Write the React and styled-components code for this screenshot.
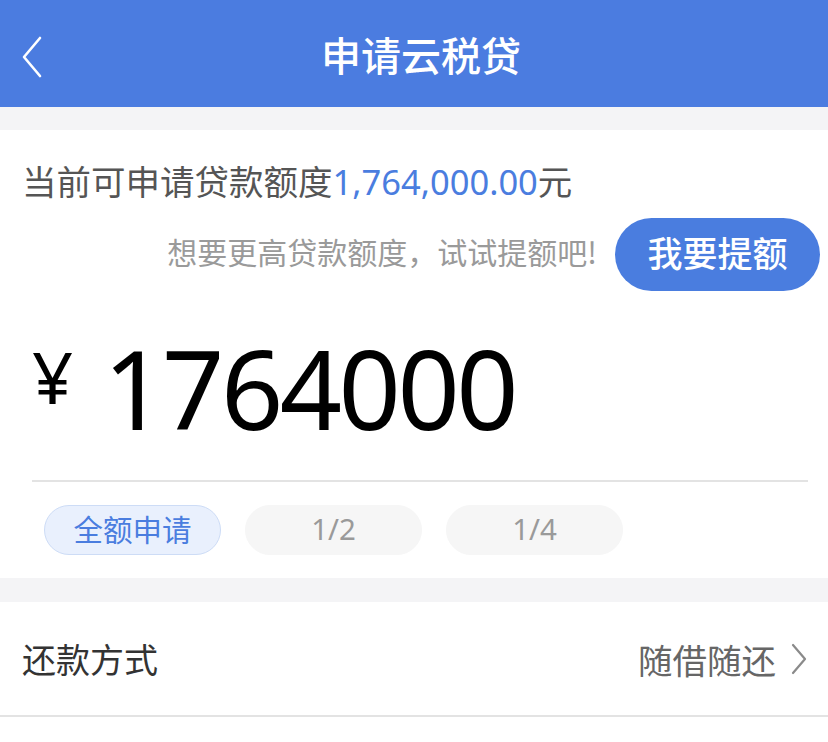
import React from "react";
import styled, { createGlobalStyle } from "styled-components";

const Global = createGlobalStyle`
  html, body { margin: 0; padding: 0; background: #ffffff; }
  body { font-family: "Noto Sans", "Noto Sans CJK SC", sans-serif; }
  * { box-sizing: border-box; }
`;

const Page = styled.div`
  width: 828px;
  min-height: 742px;
  background: #ffffff;
  display: flex;
  flex-direction: column;
`;

const Header = styled.header`
  height: 107px;
  background: #4b7ce0;
  display: flex;
  align-items: center;
  justify-content: center;
  position: relative;
`;

const BackButton = styled.button`
  position: absolute;
  left: 14px;
  top: 34px;
  width: 36px;
  height: 46px;
  padding: 0;
  border: none;
  background: transparent;
  display: flex;
  align-items: center;
  justify-content: center;
`;

const Title = styled.h1`
  margin: 0;
  font-family: "Noto Sans CJK SC", sans-serif;
  font-size: 40px;
  font-weight: 500;
  color: #ffffff;
  line-height: 1;
  padding-left: 14px;
`;

const Gap = styled.div`
  height: ${(p) => p.h}px;
  background: #f4f4f6;
`;

const Card = styled.section`
  background: #ffffff;
  padding: 32px 0 23px;
  display: flex;
  flex-direction: column;
`;

const QuotaLine = styled.div`
  padding-left: 22px;
  font-family: "Noto Sans", "Noto Sans CJK SC", sans-serif;
  font-size: 34.5px;
  line-height: 40px;
  color: #555555;
  white-space: nowrap;
`;

const Blue = styled.span`
  color: #4a7ddf;
`;

const RaiseRow = styled.div`
  margin-top: 16px;
  padding-right: 8px;
  display: flex;
  align-items: center;
  justify-content: flex-end;
  gap: 18px;
`;

const Hint = styled.span`
  margin-bottom: 8px;
  font-family: "Noto Sans CJK SC", sans-serif;
  font-size: 30px;
  color: #9a9a9a;
  white-space: nowrap;
`;

const RaiseButton = styled.button`
  width: 205px;
  height: 73px;
  border: none;
  border-radius: 37px;
  background: #4a7ddf;
  color: #ffffff;
  font-family: "Noto Sans CJK SC", sans-serif;
  font-size: 35px;
  font-weight: 500;
  padding: 0 0 6px;
`;

const AmountRow = styled.div`
  margin-top: 42px;
  padding-left: 32px;
  display: flex;
  align-items: flex-start;
  gap: 30px;
  color: #000000;
`;

const Yen = styled.span`
  margin-top: 7px;
  font-family: "Noto Sans", sans-serif;
  font-size: 72px;
  line-height: 72px;
`;

const Amount = styled.span`
  font-family: "Noto Sans", sans-serif;
  font-size: 109px;
  line-height: 109px;
  letter-spacing: -3.5px;
`;

const Divider = styled.hr`
  margin: 38px 20px 0 32px;
  border: none;
  height: 2px;
  background: #e3e3e3;
`;

const Chips = styled.div`
  margin-top: 23px;
  padding-left: 44px;
  display: flex;
  gap: 24px;
`;

const Chip = styled.button`
  width: 177px;
  height: 50px;
  border-radius: 25px;
  padding: 0 0 3px;
  font-family: "Noto Sans", "Noto Sans CJK SC", sans-serif;
  font-size: 29.5px;
  background: ${(p) => (p.active ? "#e9f0fd" : "#f6f6f6")};
  border: 1.5px solid ${(p) => (p.active ? "#cddcf6" : "#f6f6f6")};
  color: ${(p) => (p.active ? "#4a7ddf" : "#9a9a9a")};
`;

const Row = styled.div`
  height: 115px;
  padding: 0 20px 0 22px;
  display: flex;
  align-items: center;
  justify-content: space-between;
  border-bottom: 2px solid #e3e3e3;
  background: #ffffff;
`;

const RowLabel = styled.span`
  font-family: "Noto Sans CJK SC", sans-serif;
  font-size: 34px;
  color: #333333;
`;

const RowValue = styled.span`
  display: flex;
  align-items: center;
  gap: 14px;
  font-family: "Noto Sans CJK SC", sans-serif;
  font-size: 34.5px;
  color: #666666;
`;

export default function App() {
  return (
    <>
      <Global />
      <Page>
        <Header>
          <BackButton aria-label="返回">
            <svg width="24" height="42" viewBox="0 0 24 42">
              <polyline
                points="20,2 4,21 20,40"
                fill="none"
                stroke="#ffffff"
                strokeWidth="2.6"
                strokeLinecap="round"
                strokeLinejoin="round"
              />
            </svg>
          </BackButton>
          <Title>申请云税贷</Title>
        </Header>
        <Gap h={23} />
        <Card>
          <QuotaLine>
            当前可申请贷款额度<Blue>1,764,000.00</Blue>元
          </QuotaLine>
          <RaiseRow>
            <Hint>想要更高贷款额度，试试提额吧!</Hint>
            <RaiseButton>我要提额</RaiseButton>
          </RaiseRow>
          <AmountRow>
            <Yen>¥</Yen>
            <Amount>1764000</Amount>
          </AmountRow>
          <Divider />
          <Chips>
            <Chip active>全额申请</Chip>
            <Chip>1/2</Chip>
            <Chip>1/4</Chip>
          </Chips>
        </Card>
        <Gap h={24} />
        <Row>
          <RowLabel>还款方式</RowLabel>
          <RowValue>
            随借随还
            <svg width="18" height="32" viewBox="0 0 18 32">
              <polyline
                points="3,2 15,16 3,30"
                fill="none"
                stroke="#8a8a8a"
                strokeWidth="2.2"
                strokeLinecap="round"
                strokeLinejoin="round"
              />
            </svg>
          </RowValue>
        </Row>
      </Page>
    </>
  );
}
